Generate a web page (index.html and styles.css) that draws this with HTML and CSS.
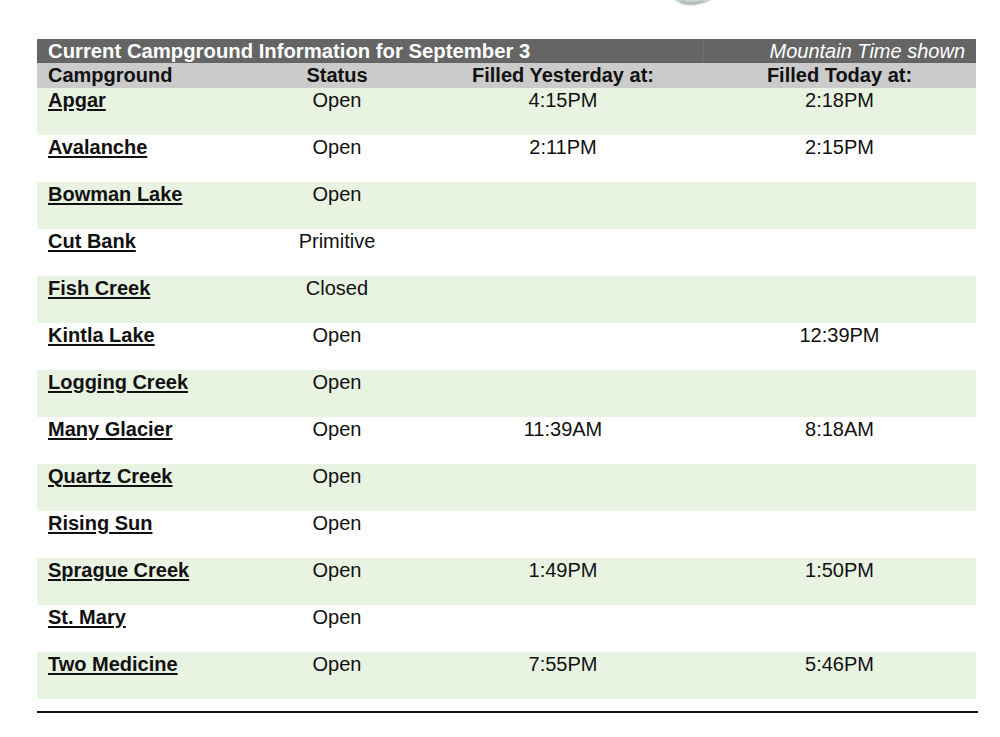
FILE: index.html
```html
<!DOCTYPE html>
<html>
<head>
<meta charset="utf-8">
<link rel="stylesheet" href="styles.css">
</head>
<body>
<div class="page">
  <div class="logo"><svg width="40" height="8" viewBox="0 0 40 8"><path d="M2 0 C6 4 14 7 24 5 C30 4 35 2 38 0 Z" fill="#c9d3cf"/><path d="M8 1 C14 4 22 4 30 1" stroke="#a9b7b2" stroke-width="1.5" fill="none"/></svg></div>
  <table class="camp">
    <colgroup>
      <col class="c1"><col class="c2"><col class="c3"><col class="c4">
    </colgroup>
    <tr class="title">
      <td colspan="3" class="ttl">Current Campground Information for September 3</td>
      <td class="tz">Mountain Time shown</td>
    </tr>
    <tr class="head">
      <th class="name">Campground</th><th>Status</th><th>Filled Yesterday at:</th><th>Filled Today at:</th>
    </tr>
    <tr class="g"><td class="name"><a href="#">Apgar</a></td><td>Open</td><td>4:15PM</td><td>2:18PM</td></tr>
    <tr><td class="name"><a href="#">Avalanche</a></td><td>Open</td><td>2:11PM</td><td>2:15PM</td></tr>
    <tr class="g"><td class="name"><a href="#">Bowman Lake</a></td><td>Open</td><td></td><td></td></tr>
    <tr><td class="name"><a href="#">Cut Bank</a></td><td>Primitive</td><td></td><td></td></tr>
    <tr class="g"><td class="name"><a href="#">Fish Creek</a></td><td>Closed</td><td></td><td></td></tr>
    <tr><td class="name"><a href="#">Kintla Lake</a></td><td>Open</td><td></td><td>12:39PM</td></tr>
    <tr class="g"><td class="name"><a href="#">Logging Creek</a></td><td>Open</td><td></td><td></td></tr>
    <tr><td class="name"><a href="#">Many Glacier</a></td><td>Open</td><td>11:39AM</td><td>8:18AM</td></tr>
    <tr class="g"><td class="name"><a href="#">Quartz Creek</a></td><td>Open</td><td></td><td></td></tr>
    <tr><td class="name"><a href="#">Rising Sun</a></td><td>Open</td><td></td><td></td></tr>
    <tr class="g"><td class="name"><a href="#">Sprague Creek</a></td><td>Open</td><td>1:49PM</td><td>1:50PM</td></tr>
    <tr><td class="name"><a href="#">St. Mary</a></td><td>Open</td><td></td><td></td></tr>
    <tr class="g"><td class="name"><a href="#">Two Medicine</a></td><td>Open</td><td>7:55PM</td><td>5:46PM</td></tr>
  </table>
  <div class="rule"></div>
</div>
</body>
</html>
```
FILE: styles.css
```css
html, body {
  margin: 0;
  padding: 0;
  background: #fff;
}
body {
  font-family: "Liberation Sans", Arial, sans-serif;
  color: #111;
}
.page {
  position: relative;
  padding: 39px 0 0 37px;
  width: 941px;
}
.logo {
  position: absolute;
  left: 673px;
  top: 0;
  line-height: 0;
}
.camp {
  border-collapse: collapse;
  width: 939px;
  table-layout: fixed;
}
.c1 { width: 214px; }
.c2 { width: 172px; }
.c3 { width: 280px; }
.c4 { width: 273px; }
.camp td, .camp th {
  padding: 0;
  font-size: 20px;
  line-height: 23px;
  text-align: center;
  vertical-align: top;
}
.camp tr td {
  height: 46px;
  padding-top: 1px;
}
.camp tr.title td {
  background: #656565;
  color: #fff;
  height: 24px;
  line-height: 24px;
  padding-top: 0;
}
.title .ttl {
  font-weight: bold;
  font-size: 20.3px;
  text-align: left;
  padding-left: 11px;
}
.title .tz {
  font-style: italic;
  text-align: right;
  padding-right: 11px;
  border-left: 1px solid #6f6f6f;
}
.head th {
  background: #cbcbcb;
  font-weight: bold;
  height: 25px;
  line-height: 25px;
  color: #111;
}
.camp .name {
  text-align: left;
  padding-left: 11px;
}
.g td {
  background: #e9f3e2;
}
.name a {
  color: #111;
  font-weight: bold;
  text-decoration: underline;
  text-decoration-thickness: 2px;
  text-underline-offset: 2px;
}
.rule {
  margin-top: 12px;
  width: 941px;
  height: 2px;
  background: #111;
}
```
